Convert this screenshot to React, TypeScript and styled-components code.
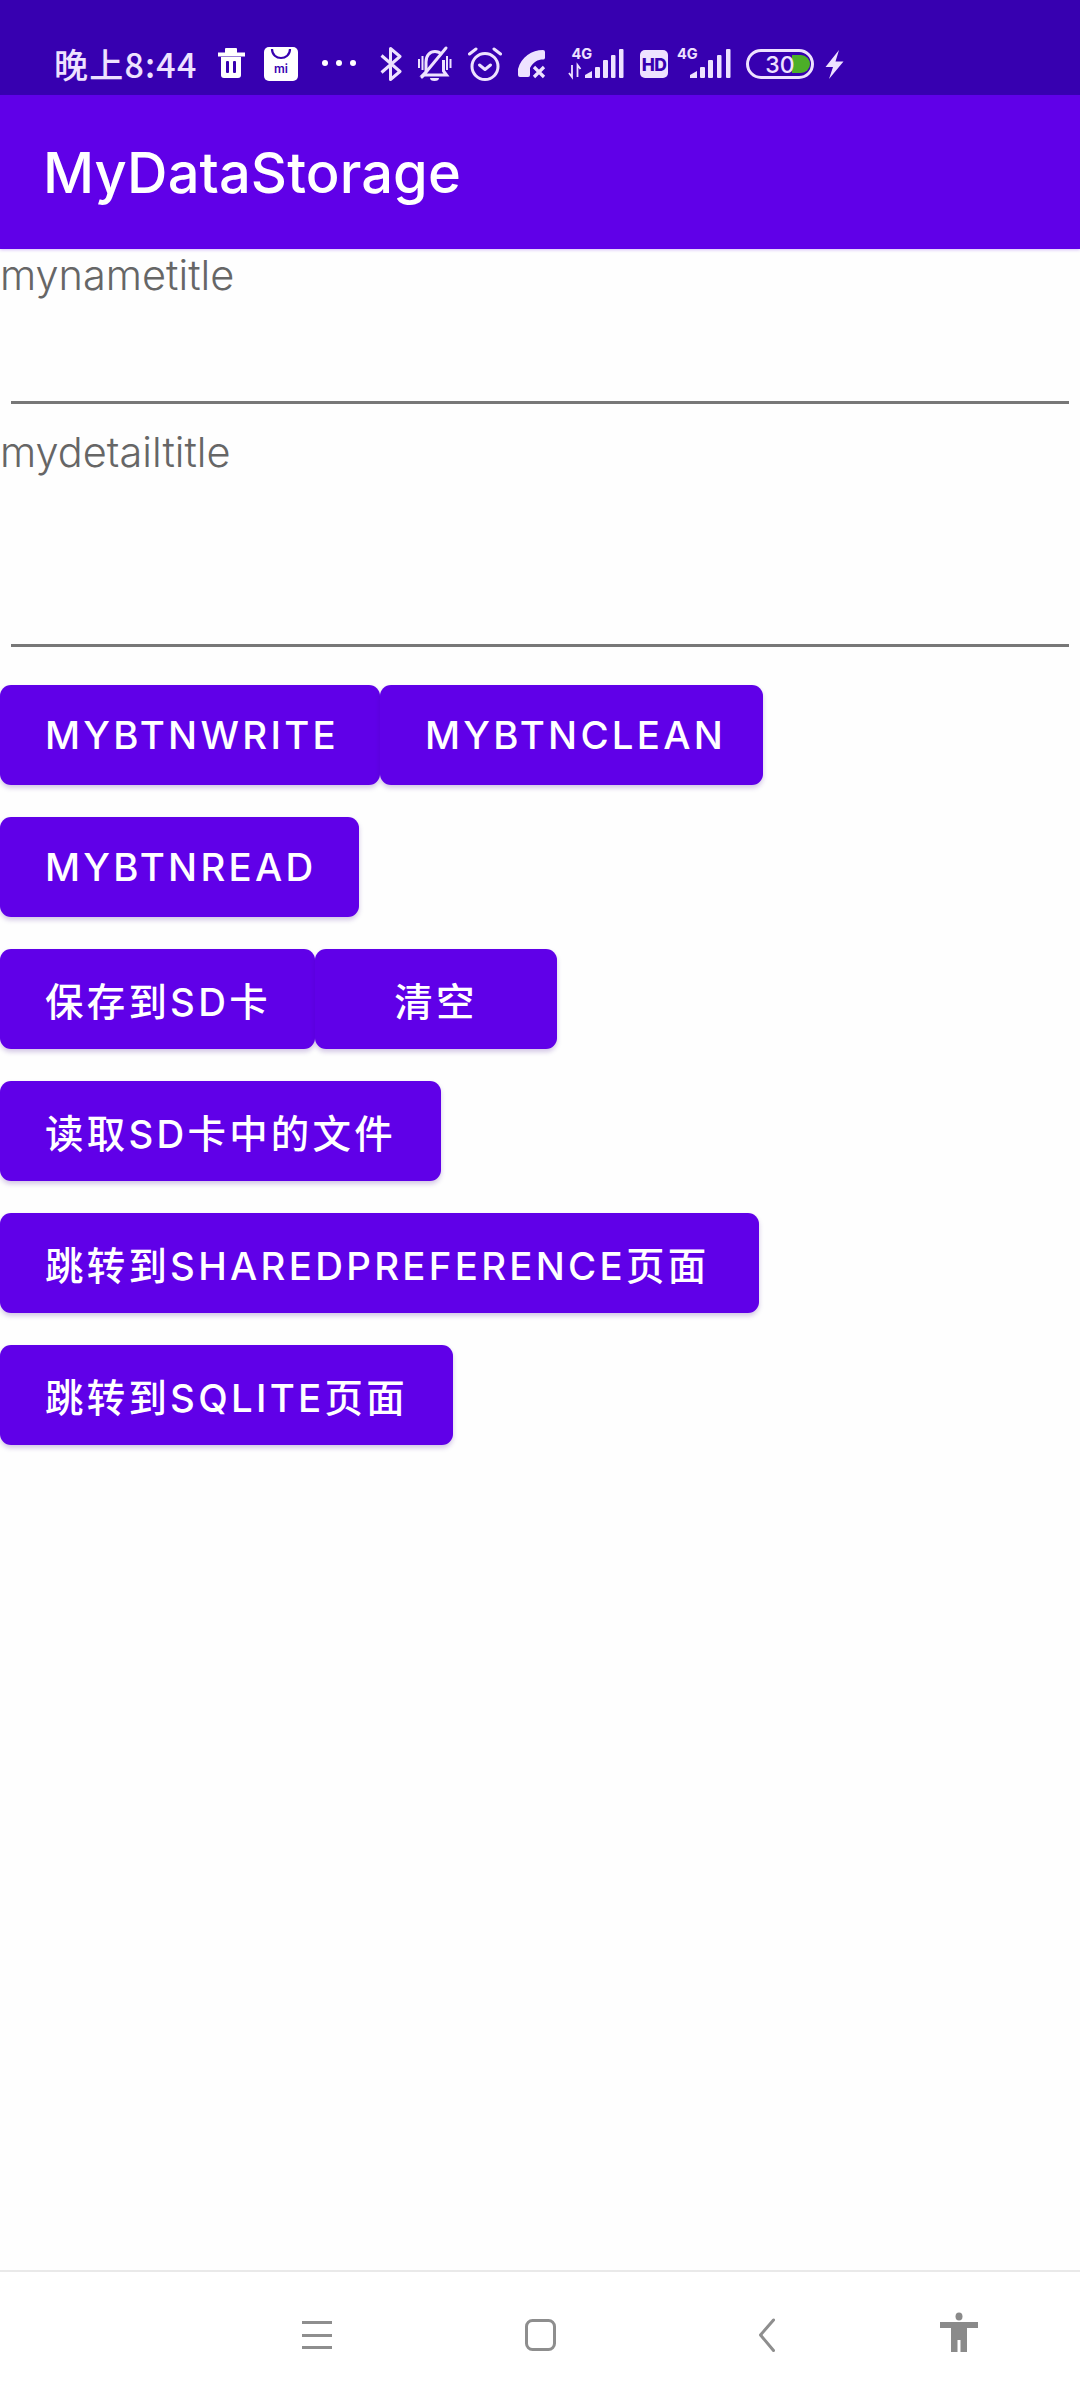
import React from 'react';
import styled, { createGlobalStyle } from 'styled-components';

const Global = createGlobalStyle`
  html, body { margin: 0; padding: 0; background: #fff; }
  * { box-sizing: border-box; }
`;

const Page = styled.div`
  width: 1080px;
  height: 2400px;
  display: flex;
  flex-direction: column;
  background: #fefefe;
  font-family: Inter, "Noto Sans CJK SC", sans-serif;
  overflow: hidden;
`;

const StatusBar = styled.div`
  height: 95px;
  flex: none;
  background: #3700b0;
  display: flex;
  align-items: flex-start;
  padding: 40px 0 0 54px;
  color: #eee2ff;
`;

const Time = styled.span`
  width: 143px;
  height: 36px;
  margin-top: 6px;
  flex: none;
  font-family: "Noto Sans CJK SC", sans-serif;
  font-size: 34px;
  line-height: 36px;
  font-weight: 500;
  letter-spacing: 1.2px;
  white-space: nowrap;
  color: #eee2ff;
`;

const Glyph = styled.svg<{ $ml: number; $w: number }>`
  display: block;
  flex: none;
  margin-left: ${p => p.$ml}px;
  width: ${p => p.$w}px;
  height: 42px;
`;

const AppBar = styled.header`
  height: 154px;
  flex: none;
  background: #6000e8;
  display: flex;
  align-items: center;
  padding: 2px 0 0 43px;
  box-shadow: 0 1px 3px rgba(98, 0, 238, 0.25);
  position: relative;
`;

const Title = styled.h1`
  margin: 0;
  font-family: Inter, sans-serif;
  font-size: 56px;
  line-height: 64px;
  font-weight: 500;
  letter-spacing: 0.1px;
  color: #fff;
`;

const Content = styled.main`
  flex: 1;
  display: flex;
  flex-direction: column;
`;

const Field = styled.section<{ $h: number; $pt: number }>`
  height: ${p => p.$h}px;
  padding-top: ${p => p.$pt}px;
  display: flex;
  flex-direction: column;
  justify-content: space-between;
`;

const Label = styled.div`
  font-family: Inter, sans-serif;
  font-size: 41.5px;
  line-height: 52px;
  font-weight: 300;
  color: #666;
`;

const Underline = styled.div`
  height: 3px;
  margin: 0 11px;
  background: #777;
`;

const ButtonStack = styled.div`
  display: flex;
  flex-direction: column;
  gap: 32px;
  margin-top: 38px;
`;

const ButtonRow = styled.div`
  display: flex;
`;

const ActionButton = styled.button<{ $w: number; $center?: boolean }>`
  width: ${p => p.$w}px;
  height: 100px;
  flex: none;
  border: none;
  border-radius: 11px;
  background: #6000e8;
  color: #fff;
  font-family: Inter, "Noto Sans CJK SC", sans-serif;
  font-size: 38.4px;
  font-weight: 500;
  letter-spacing: 3.3px;
  text-align: ${p => (p.$center ? 'center' : 'left')};
  padding: 0 0 0 ${p => (p.$center ? 0 : 45)}px;
  white-space: nowrap;
  box-shadow: 0 3px 5px rgba(60, 0, 140, 0.22);
`;

const NavBar = styled.nav`
  height: 130px;
  flex: none;
  border-top: 2px solid #e9e9e9;
  background: #fff;
  display: flex;
  align-items: flex-start;
  padding: 40px 0 0 302px;
`;

const NavGlyph = styled.svg<{ $ml: number; $w: number }>`
  display: block;
  flex: none;
  margin-left: ${p => p.$ml}px;
  width: ${p => p.$w}px;
  height: 44px;
`;

const I = '#eee2ff';
const BG = '#3700b0';

const App = () => (
  <Page>
    <Global />
    <StatusBar>
      <Time>晚上8:44</Time>
      {/* trash */}
      <Glyph $ml={21} $w={27} viewBox="0 -6 27 42">
        <path d="M7 6.500V3a1 1 0 0 1 1-1h10a1 1 0 0 1 1 1v3.500h8v4H0v-4Z" fill="#fff" />
        <path d="M3 11h20v18a3 3 0 0 1-3 3H6a3 3 0 0 1-3-3Z" fill="#fff" />
        <rect x="8" y="15" width="3" height="12" rx="1" fill={BG} />
        <rect x="15" y="15" width="3" height="12" rx="1" fill={BG} />
      </Glyph>
      {/* mi store */}
      <Glyph $ml={19} $w={34} viewBox="0 -6 34 42">
        <rect x="0" y="1" width="34" height="34" rx="5" fill="#fff" />
        <path d="M8 3c0 12 18 12 18 0" fill="none" stroke={BG} strokeWidth="2.2" />
        <text x="17" y="26.500" textAnchor="middle" fontFamily="Inter, sans-serif" fontSize="12" fontWeight="600" fill={BG}>mi</text>
      </Glyph>
      {/* dots */}
      <Glyph $ml={24} $w={35} viewBox="0 -6 35 42">
        <circle cx="3" cy="17" r="3" fill="#fff" />
        <circle cx="17" cy="17" r="3" fill="#fff" />
        <circle cx="31" cy="17" r="3" fill="#fff" />
      </Glyph>
      {/* bluetooth */}
      <Glyph $ml={23} $w={22} viewBox="0 -6 22 42">
        <path d="M1.500 9.500 20 25.500 10.500 33.500V2.500l9.500 8L1.500 26.500" fill="none" stroke={I} strokeWidth="3" strokeLinejoin="round" />
      </Glyph>
      {/* muted bell */}
      <Glyph $ml={15} $w={35} viewBox="0 -6 35 42">
        <path d="M9 25V16c0-6.500 4-10.500 9-10.500 3 0 5 1 7 3M26.500 14v11l3 4H6l3-3" fill="none" stroke={I} strokeWidth="3" />
        <path d="M5 31 29 2" stroke={I} strokeWidth="3" strokeLinecap="round" />
        <path d="M13 32h9a4.500 3 0 0 1-9 0Z" fill={I} />
        <path d="M2 13v9M5.500 10v14M30 10v14M33.500 13v9" stroke={I} strokeWidth="2" />
      </Glyph>
      {/* alarm */}
      <Glyph $ml={15} $w={35} viewBox="0 -6 35 42">
        <circle cx="18" cy="20.500" r="13" fill="none" stroke={I} strokeWidth="3" />
        <path d="M12.500 19l5.500 4.500 5.500-4.500" fill="none" stroke={I} strokeWidth="3" strokeLinecap="round" strokeLinejoin="round" />
        <path d="M2.500 8 9 3M33.500 8 27 3" stroke={I} strokeWidth="3" strokeLinecap="round" />
      </Glyph>
      {/* missed call */}
      <Glyph $ml={16} $w={35} viewBox="0 -6 35 42">
        <path d="M0 23C3 11 14 4 25 4a2 2 0 0 1 2 2v6a2 2 0 0 1-2 1.500C20 13.500 15 16 12 22v7a2 2 0 0 1-2 2H2a2 2 0 0 1-2-2Z" fill={I} />
        <path d="M16 21l10 10M26 21 16 31" stroke={I} strokeWidth="3.200" />
      </Glyph>
      {/* 4G signal with arrows */}
      <Glyph $ml={15} $w={57} viewBox="0 -6 57 42">
        <text x="3.500" y="12.500" fontFamily="Inter, sans-serif" fontSize="14.500" fontWeight="700" fill={I}>4G</text>
        <path d="M4 19v12l-3-4M9.500 31V19l3 4" fill="none" stroke={I} strokeWidth="1.800" />
        <path d="M17 32v-3l7-4v7Z" fill={I} />
        <rect x="27" y="21" width="5" height="11" rx="1" fill={I} />
        <rect x="35" y="14" width="5" height="18" rx="1" fill={I} />
        <rect x="43" y="9" width="4.500" height="23" rx="1" fill={I} />
        <rect x="51" y="3" width="4.500" height="29" rx="1" fill={I} />
      </Glyph>
      {/* HD */}
      <Glyph $ml={15} $w={28} viewBox="0 -6 28 42">
        <rect x="0" y="4" width="28" height="28" rx="5" fill={I} />
        <text x="14" y="24.500" textAnchor="middle" fontFamily="Inter, sans-serif" fontSize="17.500" fontWeight="800" letterSpacing="-0.5" fill={BG}>HD</text>
      </Glyph>
      {/* 4G signal */}
      <Glyph $ml={9} $w={54} viewBox="0 -6 54 42">
        <text x="0" y="12.500" fontFamily="Inter, sans-serif" fontSize="14.500" fontWeight="700" fill={I}>4G</text>
        <path d="M13 32v-3l7-4v7Z" fill={I} />
        <rect x="23" y="21" width="5" height="11" rx="1" fill={I} />
        <rect x="31" y="14" width="5" height="18" rx="1" fill={I} />
        <rect x="40" y="9" width="4.500" height="23" rx="1" fill={I} />
        <rect x="49" y="3" width="4.500" height="29" rx="1" fill={I} />
      </Glyph>
      {/* battery */}
      <Glyph $ml={15} $w={68} viewBox="0 -6 68 42">
        <rect x="1.500" y="4.500" width="65" height="27" rx="13.500" fill="none" stroke={I} strokeWidth="3" />
        <path d="M46 9h9a9 9 0 0 1 0 18h-9Z" fill="#4caf28" />
        <text x="34" y="27" textAnchor="middle" fontFamily="Inter, sans-serif" fontSize="23" fontWeight="500" fill={I}>30</text>
      </Glyph>
      {/* bolt */}
      <Glyph $ml={11} $w={19} viewBox="0 -6 19 42">
        <path d="M14 4 0.500 21H8L4 33 18.500 15.500H10.500Z" fill={I} />
      </Glyph>
    </StatusBar>
    <AppBar>
      <Title>MyDataStorage</Title>
    </AppBar>
    <Content>
      <Field $h={155} $pt={0}>
        <Label>mynametitle</Label>
        <Underline />
      </Field>
      <Field $h={243} $pt={22}>
        <Label>mydetailtitle</Label>
        <Underline />
      </Field>
      <ButtonStack>
        <ButtonRow>
          <ActionButton $w={380}>MYBTNWRITE</ActionButton>
          <ActionButton $w={383}>MYBTNCLEAN</ActionButton>
        </ButtonRow>
        <ButtonRow>
          <ActionButton $w={359}>MYBTNREAD</ActionButton>
        </ButtonRow>
        <ButtonRow>
          <ActionButton $w={315}>保存到SD卡</ActionButton>
          <ActionButton $w={242} $center>清空</ActionButton>
        </ButtonRow>
        <ButtonRow>
          <ActionButton $w={441}>读取SD卡中的文件</ActionButton>
        </ButtonRow>
        <ButtonRow>
          <ActionButton $w={759}>跳转到SHAREDPREFERENCE页面</ActionButton>
        </ButtonRow>
        <ButtonRow>
          <ActionButton $w={453}>跳转到SQLITE页面</ActionButton>
        </ButtonRow>
      </ButtonStack>
    </Content>
    <NavBar>
      <NavGlyph $ml={0} $w={30} viewBox="0 0 30 44">
        <path d="M0 10.500h30M0 23.500h30M0 35.500h30" stroke="#8e8e8e" strokeWidth="3" />
      </NavGlyph>
      <NavGlyph $ml={193} $w={31} viewBox="0 0 31 44">
        <rect x="1.500" y="8.500" width="28" height="29" rx="6" fill="none" stroke="#8e8e8e" strokeWidth="3" />
      </NavGlyph>
      <NavGlyph $ml={203} $w={16} viewBox="0 0 16 44">
        <path d="M14.500 8 1.500 23l13 15.500" fill="none" stroke="#8e8e8e" strokeWidth="3" strokeLinecap="round" strokeLinejoin="round" />
      </NavGlyph>
      <NavGlyph $ml={165} $w={38} viewBox="0 0 38 44">
        <ellipse cx="19" cy="4.500" rx="3.500" ry="4" fill="#8a8a8a" />
        <path d="M0 10h38v6H27v24h-6.500V28h-3v12H11V16H0Z" fill="#8a8a8a" />
      </NavGlyph>
    </NavBar>
  </Page>
);

export default App;
